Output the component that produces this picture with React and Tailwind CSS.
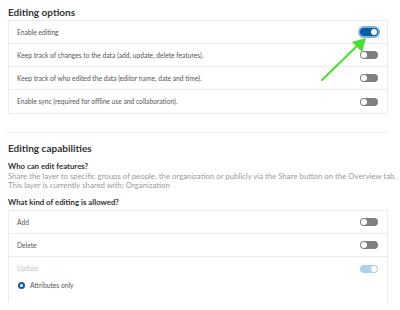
import React from "react";

function Toggle({ on = false, disabled = false, focus = false }) {
  const track = on
    ? disabled
      ? "bg-[#a9d1f0]"
      : "bg-[#0b5ea6]"
    : "bg-[#7f7f7f]";
  return (
    <span
      className={`relative inline-flex h-[8px] w-[18px] shrink-0 items-center rounded-full ${track} ${
        focus ? "ring-2 ring-[#7fb3dd]" : ""
      }`}
    >
      <span
        className={`absolute top-[1px] h-[6px] w-[6px] rounded-full bg-white ${
          on ? "right-[1px]" : "left-[1px]"
        }`}
      />
    </span>
  );
}

function Row({ label, last, children, muted }) {
  return (
    <div
      className={`flex h-[23px] items-center justify-between pl-[8px] pr-[9px] ${
        last ? "" : "border-b border-[#ececec]"
      }`}
    >
      <span className={`text-[6.7px] ${muted ? "text-[#c4c4c4]" : "text-[#555]"}`}>{label}</span>
      {children}
    </div>
  );
}

export default function App() {
  return (
    <div
      className="h-[310px] w-[400px] overflow-hidden bg-white"
      style={{ fontFamily: "Lato, 'Open Sans', sans-serif" }}
    >
      <div className="relative px-[8px] pt-[5px]">
        <h2 className="text-[10px] font-bold leading-[14px] text-[#333]">Editing options</h2>
        <div className="mt-[1px] mr-[4px] border border-[#ececec]">
          <Row label="Enable editing">
            <Toggle on focus />
          </Row>
          <Row label="Keep track of changes to the data (add, update, delete features).">
            <Toggle />
          </Row>
          <Row label="Keep track of who edited the data (editor name, date and time).">
            <Toggle />
          </Row>
          <Row label="Enable sync (required for offline use and collaboration)." last>
            <Toggle />
          </Row>
        </div>

        {/* annotation arrow */}
        <svg
          className="absolute left-[318px] top-[34px]"
          width="52"
          height="50"
          viewBox="0 0 52 50"
        >
          <line x1="4" y1="46" x2="42" y2="9" stroke="#44e02e" strokeWidth="2" strokeLinecap="round" />
          <polygon points="48,4 34,8 44,18" fill="#44e02e" />
        </svg>

        <div className="mt-[18px] -ml-[3px] mr-[4px] border-t border-[#f0f0f0]" />

        <h2 className="mt-[8px] text-[10px] font-bold leading-[14px] text-[#333]">Editing capabilities</h2>
        <p className="mt-[6px] text-[7.8px] font-bold leading-[10px] text-[#333]">Who can edit features?</p>
        <p className="mt-[1px] whitespace-nowrap text-[7.8px] leading-[9px] text-[#9a9a9a]">
          Share the layer to specific groups of people, the organization or publicly via the Share button on the Overview tab.
          <br />
          This layer is currently shared with: Organization
        </p>
        <p className="mt-[7px] text-[7.8px] font-bold leading-[10px] text-[#333]">What kind of editing is allowed?</p>
        <div className="mt-[3px] mr-[4px] h-[92px] border-x border-t border-[#ececec]">
          <Row label="Add">
            <Toggle />
          </Row>
          <Row label="Delete">
            <Toggle />
          </Row>
          <Row label="Update" muted last>
            <Toggle on disabled />
          </Row>
          <div className="flex items-center gap-[5px] pl-[9px]">
            <span className="flex h-[7px] w-[7px] items-center justify-center rounded-full bg-[#0b5ea6]">
              <span className="h-[3px] w-[3px] rounded-full bg-white" />
            </span>
            <span className="text-[6.7px] text-[#555]">Attributes only</span>
          </div>
        </div>
      </div>
    </div>
  );
}
